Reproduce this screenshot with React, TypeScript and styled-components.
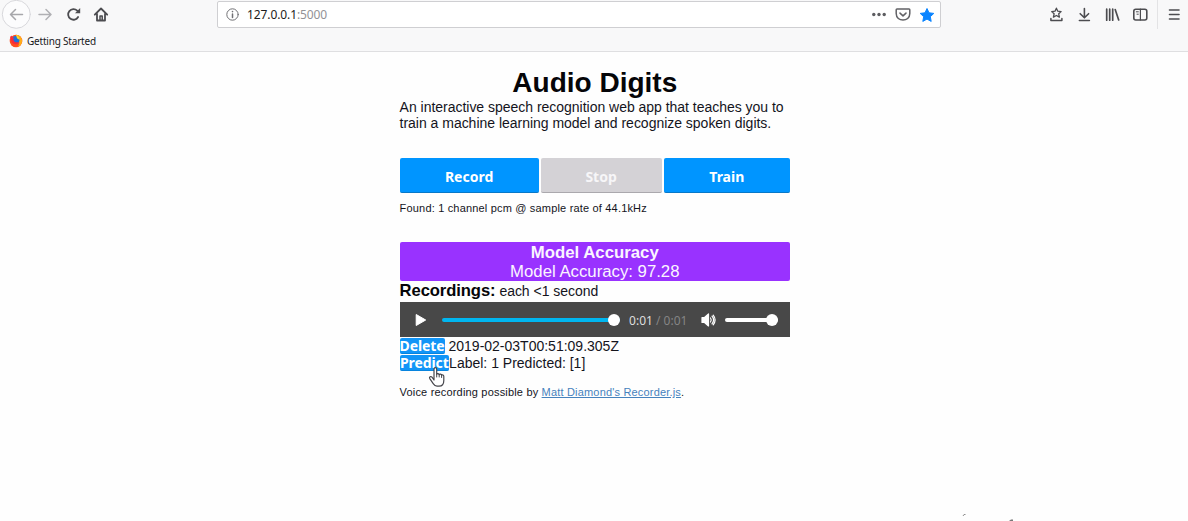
import React from "react";
import styled, { createGlobalStyle } from "styled-components";

const GlobalStyle = createGlobalStyle`
  * { box-sizing: border-box; }
  body { margin: 0; background: #fefefe; color: #14141c; font-family: "Liberation Sans", Arial, sans-serif; }
  svg { display: block; flex: none; }
`;

const Window = styled.div`
  width: 100%;
  height: 521px;
  overflow: hidden;
  background: #fefefe;
`;

const Chrome = styled.header`
  height: 52px;
  background: #f8f8f9;
  border-bottom: 1px solid #dfdfe1;
  font-family: "Noto Sans", sans-serif;
`;

const Toolbar = styled.div`
  height: 30px;
  display: flex;
  align-items: flex-start;
`;

const Navigation = styled.nav`
  width: 217px;
  height: 30px;
  display: flex;
`;

const AddressBar = styled.div`
  width: 724px;
  height: 27px;
  margin-top: 1px;
  display: flex;
  align-items: center;
  background: #fff;
  border: 1px solid #cfcfd2;
  border-radius: 2px;
  padding: 0 5px 0 8px;
`;

const Url = styled.span`
  margin-left: 8px;
  flex: 1;
  font-size: 12px;
  line-height: 16px;
  padding-top: 1px;
  letter-spacing: -0.1px;
  color: #1c1c20;
  span { color: #929296; }
`;

const PageActions = styled.div`
  display: flex;
  gap: 8px;
`;

const Tools = styled.div`
  margin-left: 107px;
  display: flex;
  gap: 12px;
  padding-top: 7px;
`;

const MenuArea = styled.div`
  margin-left: 9px;
  height: 29px;
  padding: 7px 0 0 9px;
  border-left: 1px solid #e3e3e5;
`;

const Bookmarks = styled.div`
  height: 22px;
  display: flex;
  align-items: center;
  gap: 4px;
  padding-left: 9px;
  font-size: 10px;
  letter-spacing: -0.2px;
  color: #17171a;
`;

const Page = styled.main`
  width: 390.4px;
  margin: 0 0 0 399.6px;
  padding-top: 14px;
`;

const Title = styled.h1`
  margin: 0;
  height: 33px;
  font-size: 28px;
  line-height: 34px;
  text-align: center;
  color: #050508;
`;

const Intro = styled.p`
  margin: 0;
  font-size: 14px;
  line-height: 16px;
  letter-spacing: -0.02px;
  white-space: nowrap;
`;

const Line = styled.span`
  display: block;
`;

const Controls = styled.div`
  display: grid;
  grid-template-columns: 139px 121px 1fr;
  gap: 2px;
  margin-top: 27px;
`;

const ControlButton = styled.button<{ $muted?: boolean }>`
  height: 35px;
  padding: 3px 0 0;
  border: 0;
  border-bottom: 1px solid ${(p) => (p.$muted ? "#aaa8ad" : "#0878c8")};
  border-radius: 2px;
  background: ${(p) => (p.$muted ? "#d4d2d6" : "#0095ff")};
  color: ${(p) => (p.$muted ? "#f7f6f8" : "#fff")};
  font: bold 14px "Noto Sans", sans-serif;
`;

const Note = styled.p`
  margin: 0;
  font-size: 11px;
  line-height: 14px;
  letter-spacing: 0.18px;
  white-space: nowrap;
`;

const Format = styled(Note)`
  margin-top: 8px;
`;

const Accuracy = styled.section`
  margin-top: 27px;
  height: 39px;
  padding-top: 1px;
  border-radius: 2px;
  background: #9932ff;
  color: #fbf5ff;
  text-align: center;
  font-size: 16.75px;
  line-height: 19px;
`;

const Recordings = styled.div`
  height: 21px;
  line-height: 19px;
  font-size: 14px;
  letter-spacing: -0.03px;
  white-space: nowrap;
  strong { font-size: 16.6px; letter-spacing: -0.08px; color: #050508; }
`;

const Player = styled.div`
  height: 35px;
  display: flex;
  align-items: center;
  background: #484848;
  padding: 0 12px 0 15px;
`;

const Track = styled.div<{ $width: number; $color: string }>`
  width: ${(p) => p.$width}px;
  height: 4px;
  border-radius: 2px;
  background: ${(p) => p.$color};
  display: flex;
  align-items: center;
  justify-content: flex-end;
`;

const Knob = styled.span`
  flex: none;
  width: 12px;
  height: 12px;
  border-radius: 50%;
  background: #fff;
`;

const Time = styled.span`
  width: 59px;
  margin: 0 13px 0 8.6px;
  padding-top: 1px;
  font: 12px "Noto Sans", sans-serif;
  color: #dedede;
  white-space: nowrap;
  span { color: #858585; }
`;

const Entry = styled.div`
  position: relative;
  height: 17.5px;
  display: flex;
  align-items: center;
  font-size: 14px;
  line-height: 17px;
  white-space: nowrap;
`;

const EntryText = styled.span`
  padding-top: 1px;
  white-space: pre;
`;

const EntryButton = styled.button<{ $width: number }>`
  width: ${(p) => p.$width}px;
  height: 16px;
  padding: 0;
  border: 0;
  border-bottom: 1px solid #0784de;
  border-radius: 2px;
  background: #1295f7;
  color: #fff;
  font: bold 14px/15px "Noto Sans", sans-serif;
  letter-spacing: -0.1px;
`;

const Pointer = styled.svg`
  position: absolute;
  left: 28px;
  top: 11px;
`;

const Credit = styled(Note)`
  margin-top: 13px;
  a { color: #4682bd; text-decoration: underline; }
`;

const Specks = styled.svg`
  position: absolute;
  left: 960px;
  top: 512px;
`;

const line = { fill: "none", stroke: "#4c4c50", strokeWidth: 1.5, strokeLinecap: "round", strokeLinejoin: "round" } as const;

const NavIcons = () => (
  <svg width="120" height="30" viewBox="0 0 120 30" {...line}>
    <circle cx="16.3" cy="14.3" r="14" fill="#fcfcfd" stroke="#d8d8dc" strokeWidth="1" />
    <path d="M22.5 14.5H10.5M15.5 9.5l-5 5 5 5" stroke="#a7a7ab" />
    <path d="M39 14.5h12M46 9.5l5 5-5 5" stroke="#b0b0b4" />
    <path d="M78.1 17a5.3 5.3 0 1 1-.9-6.3" strokeWidth="1.8" />
    <path d="M80.2 8.1v5.2H75z" fill="#4c4c50" stroke="none" />
    <path d="M94.8 14.7l6.2-6.2 6.2 6.2M97 14v6.5h8V14" strokeWidth="1.8" />
    <path d="M100 20v-4h2.2v4" />
  </svg>
);

const Firefox = () => (
  <svg width="14" height="14" viewBox="0 0 14 14">
    <circle cx="7" cy="7" r="6.3" fill="#ff4d20" />
    <path d="M7.3.7c4 .4 6.2 3.6 5.8 7-.4 2.7-2.2 4.6-4.6 5.3 2.8-3.4 2.2-6.8-1.2-8.5z" fill="#ffad18" />
    <circle cx="6.8" cy="5.8" r="3.7" fill="#1c72db" />
    <path d="M7 .7c2.5 1.2 3.8 3 3.8 5.2L8 4.2z" fill="#ffda28" />
    <path d="M1 3.1L2.5 1.6l.8 2 2 .4-1.1 1.5C5.3 8.2 7 8.8 9.7 8c-1.3 3-5.2 3-6.8.6z" fill="#f72b3b" />
  </svg>
);

export default function App() {
  return (
    <Window>
      <GlobalStyle />
      <Chrome>
        <Toolbar>
          <Navigation><NavIcons /></Navigation>
          <AddressBar>
            <svg width="13" height="13" viewBox="0 0 13 13" {...line} stroke="#707074" strokeWidth="1">
              <circle cx="6.5" cy="6.5" r="5.7" />
              <path d="M6.5 6v3.4" strokeWidth="1.5" /><circle cx="6.5" cy="3.6" r=".8" fill="#707074" stroke="none" />
            </svg>
            <Url>127.0.0.1<span>:5000</span></Url>
            <PageActions>
              <svg width="16" height="16" viewBox="0 0 16 16" fill="#5d5d61">
                <circle cx="2.8" cy="7.5" r="1.7" /><circle cx="8" cy="7.5" r="1.7" /><circle cx="13.2" cy="7.5" r="1.7" />
              </svg>
              <svg width="16" height="16" viewBox="0 0 16 16" {...line} stroke="#626266">
                <path d="M2 2h12c.5 0 .8.4.8.8V6.5c0 8.8-13.6 8.8-13.6 0V2.8c0-.4.3-.8.8-.8zM5 6.1l3 2.8 3-2.8" />
              </svg>
              <svg width="16" height="16" viewBox="0 0 16 16">
                <path d="M8 1.5l2 4.3 4.8.6-3.5 3.3.9 4.7L8 12.1l-4.2 2.3.9-4.7L1.2 6.4 6 5.8z" fill="#0a84ff" stroke="#0a84ff" strokeLinejoin="round" />
              </svg>
            </PageActions>
          </AddressBar>
          <Tools>
            <svg width="16" height="16" viewBox="0 0 16 16" {...line}>
              <path d="M8.4 1.2l1.4 3 3.3.4-2.4 2.2.7 3.3-3-1.6-3 1.6.7-3.3-2.4-2.2 3.3-.4z" strokeWidth="1.3" />
              <path d="M2.9 11.5v2h11v-2" />
            </svg>
            <svg width="16" height="16" viewBox="0 0 16 16" {...line} strokeWidth="1.6">
              <path d="M8.4 1.5v9M4.2 6.7l4.2 4.1 4.2-4.1M3.4 13.5h10" />
            </svg>
            <svg width="16" height="16" viewBox="0 0 16 16" {...line} strokeWidth="1.7">
              <path d="M2.7 2.2v11M5.7 2.2v11M8.7 2.2v11M11.2 2.5l3.5 10.5" />
            </svg>
            <svg width="16" height="16" viewBox="0 0 16 16" {...line} strokeWidth="1.6">
              <rect x="1.8" y="2.2" width="13" height="10.8" rx="2" />
              <path d="M8.4 2.2V13" strokeWidth="1.2" /><path d="M4.3 4.8h2M5 7.2h1.3" strokeWidth="1" />
            </svg>
          </Tools>
          <MenuArea>
            <svg width="16" height="16" viewBox="0 0 16 16" {...line} strokeWidth="1.6">
              <path d="M2.5 3h9.5M2.5 7.5h9.5M2.5 12h9.5" />
            </svg>
          </MenuArea>
        </Toolbar>
        <Bookmarks><Firefox />Getting Started</Bookmarks>
      </Chrome>
      <Page>
        <Title>Audio Digits</Title>
        <Intro>
          <Line>An interactive speech recognition web app that teaches you to</Line>
          <Line>train a machine learning model and recognize spoken digits.</Line>
        </Intro>
        <Controls>
          <ControlButton>Record</ControlButton>
          <ControlButton $muted>Stop</ControlButton>
          <ControlButton>Train</ControlButton>
        </Controls>
        <Format>Found: 1 channel pcm @ sample rate of 44.1kHz</Format>
        <Accuracy>
          <Line as="strong">Model Accuracy</Line>
          <Line>Model Accuracy: 97.28</Line>
        </Accuracy>
        <Recordings><strong>Recordings:</strong> each &lt;1 second</Recordings>
        <Player>
          <svg width="27" height="14" viewBox="0 0 27 14"><path d="M1.2 1.5v11L10.7 7z" fill="#fff" stroke="#fff" strokeLinejoin="round" /></svg>
          <Track $width={179} $color="#00b6f0"><Knob /></Track>
          <Time>0:01 <span>/ 0:01</span></Time>
          <svg width="24" height="16" viewBox="0 0 24 16" {...line} stroke="#fff" strokeWidth="1.2">
            <path d="M1 5.5h2.5L7.5 2v12l-4-3.5H1z" fill="#fff" />
            <path d="M9.5 6q1.5 2 0 4M11 4.2q3.2 3.8 0 7.6M12.2 3.2q3.8 4.8 0 9.6" />
          </svg>
          <Track $width={53} $color="#fff"><Knob /></Track>
        </Player>
        <Entry><EntryButton $width={45}>Delete</EntryButton><EntryText> 2019-02-03T00:51:09.305Z</EntryText></Entry>
        <Entry>
          <EntryButton $width={49.5}>Predict</EntryButton><EntryText>Label: 1 Predicted: [1]</EntryText>
          <Pointer width="18" height="22" viewBox="0 0 18 22">
            <path d="M6 14V3.2c0-2.2 2.7-2.2 2.7 0v5c.4-1 2.3-.8 2.5.4.5-.8 2.2-.6 2.4.5.8-.6 2.2-.2 2.2 1.3v4c0 3-1.5 5.7-4.8 5.7H9c-2 0-2.8-1-3.8-2.5l-3.4-5c-1-1.8 1-2.7 2.2-1.5z" fill="#fff" stroke="#45454b" strokeWidth="1.2" strokeLinejoin="round" />
            <path d="M8.7 8v3M11.2 8.5V11M13.6 9v2.5" stroke="#45454b" strokeLinecap="round" />
          </Pointer>
        </Entry>
        <Credit>Voice recording possible by <a>Matt Diamond's Recorder.js</a>.</Credit>
      </Page>
      <Specks width="60" height="9" viewBox="0 0 60 9">
        <path d="M3 4l1-1.5h1.5" fill="none" stroke="#8e8e8e" />
        <path d="M49 9l2-1.5h2V9" fill="#777" />
      </Specks>
    </Window>
  );
}
